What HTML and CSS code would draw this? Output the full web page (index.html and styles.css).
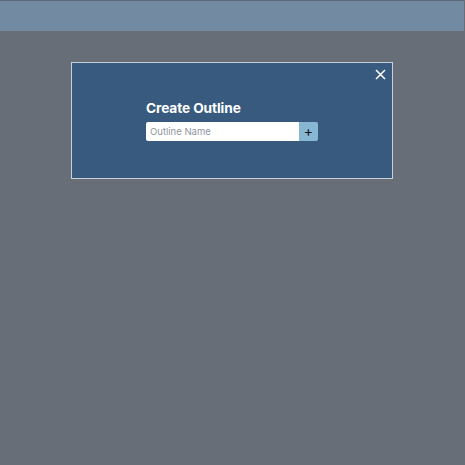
FILE: index.html
```html
<!DOCTYPE html>
<html>
<head>
<meta charset="utf-8">
<link rel="stylesheet" href="styles.css">
</head>
<body>
<div class="page">
  <header class="topbar"></header>
  <main class="stage">
    <div class="modal">
      <button class="close" aria-label="Close">
        <svg width="11" height="11" viewBox="0 0 11 11"><path d="M1 1L10 10M10 1L1 10" stroke="#fff" stroke-width="1.5" fill="none"/></svg>
      </button>
      <div class="content">
        <h2 class="title">Create Outline</h2>
        <div class="field">
          <input class="name" type="text" placeholder="Outline Name">
          <button class="add">+</button>
        </div>
      </div>
    </div>
  </main>
</div>
</body>
</html>
```
FILE: styles.css
```css
html, body {
  margin: 0;
  padding: 0;
}
body {
  width: 465px;
  height: 465px;
  background: #686e78;
  font-family: Inter, "Liberation Sans", sans-serif;
  overflow: hidden;
}
.page {
  display: flex;
  flex-direction: column;
  width: 464px;
  height: 464px;
  border-top: 1px solid #5e6878;
}
.topbar {
  height: 30px;
  background: #738aa3;
  flex: none;
}
.stage {
  display: flex;
  justify-content: center;
  padding-top: 31px;
}
.modal {
  position: relative;
  box-sizing: border-box;
  width: 322px;
  height: 117px;
  margin-left: 0;
  background: #385a7e;
  border: 1px solid #c9d0d9;
  padding: 36px 0 0 74px;
}
.close {
  position: absolute;
  top: 5px;
  right: 5px;
  width: 13px;
  height: 13px;
  padding: 1px;
  border: 0;
  background: transparent;
  display: flex;
  align-items: center;
  justify-content: center;
}
.title {
  margin: 0;
  color: #fff;
  font-size: 13.7px;
  font-weight: 700;
  line-height: 18px;
  letter-spacing: -0.1px;
}
.field {
  display: flex;
  margin-top: 5px;
}
.name {
  box-sizing: border-box;
  width: 153px;
  height: 19px;
  border: 0;
  border-radius: 2px 0 0 2px;
  background: #fff;
  padding: 0 4px;
  font-family: Inter, "Liberation Sans", sans-serif;
  font-size: 9.5px;
  outline: none;
}
.name::placeholder {
  color: #8f96a0;
}
.add {
  box-sizing: border-box;
  width: 19px;
  height: 19px;
  border: 0;
  border-radius: 0 2px 2px 0;
  background: #88b7d4;
  color: #111;
  font-family: Inter, "Liberation Sans", sans-serif;
  font-size: 14px;
  line-height: 17px;
  padding: 0 0 2px;
  text-align: center;
}
```
